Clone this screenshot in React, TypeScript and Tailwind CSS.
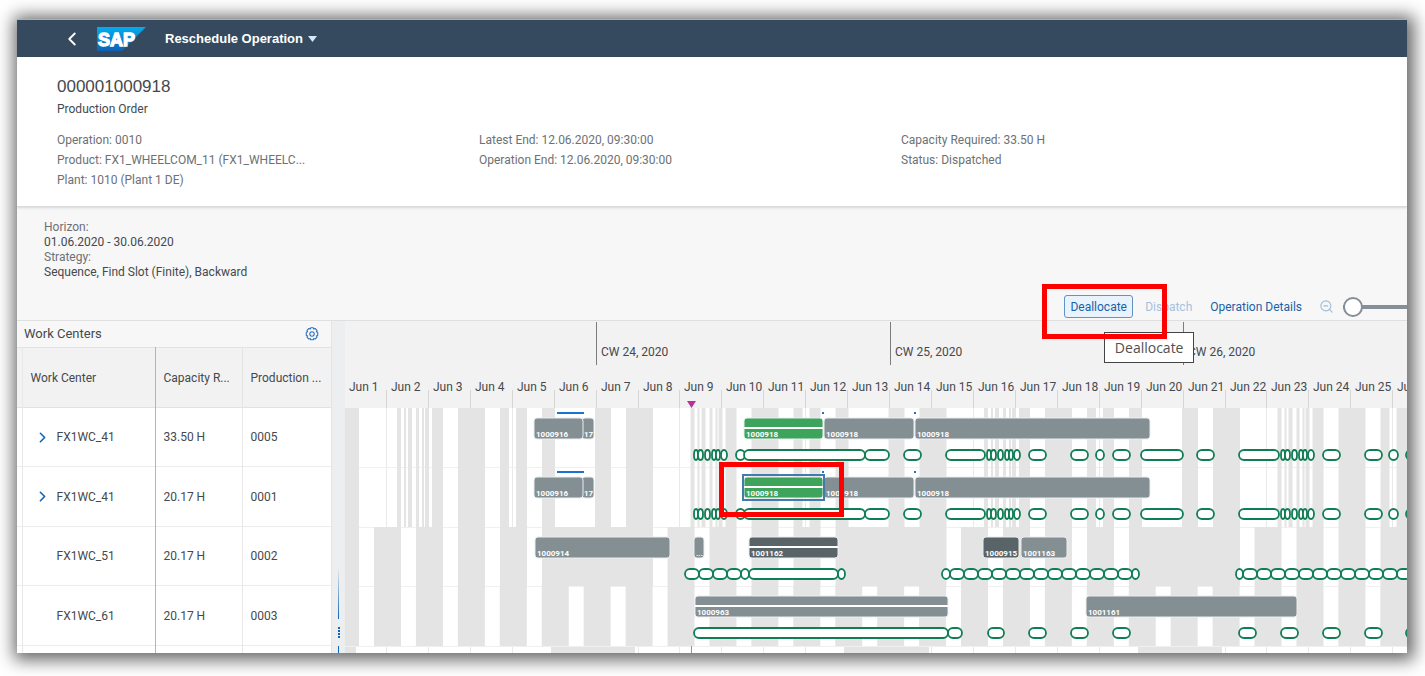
import { ChevronLeft, ChevronRight, ZoomOut } from "lucide-react";

/** Width of one day and of one week on the time axis. */
const DAY = 41.93;
const WEEK = DAY * 7;
const DAYS = Array.from({ length: 26 }, (_, i) => i);

/** Height of the axis above the first row. */
const AXIS = 87;

type Span = [number, number];

interface Bar {
  span: Span;
  label: string;
  tone?: "plain" | "green" | "dark";
  split?: boolean;
}

interface Row {
  center: string;
  capacity: string;
  order: string;
  expandable?: boolean;
  top: number;
  height: number;
  idle: Span[];
  bars: Bar[];
  pills: Span[];
  lines?: Span[];
  selected?: Span;
}

const TONES = { plain: "#848f94", green: "#3fa45b", dark: "#596468" };

const shift = (spans: Span[], by: number): Span[] => spans.map(([a, b]) => [a + by, b + by]);
const weekly = (spans: Span[]): Span[] => [0, 1, 2, 3].flatMap((w) => shift(spans, w * WEEK));

const SHIFT_IDLE: Span[] = [
  [0, 14],
  ...weekly([
    [52, 56], [59, 61], [63, 67], [71, 74], [77, 79], [80, 84], [87, 98],
    [113, 140], [155, 164], [171, 182], [197, 210], [250, 266], [281, 308],
  ]),
];

const WEEKDAY_IDLE: Span[] = [
  [0, 14],
  ...weekly([[29, 56], [71, 98], [113, 140], [155, 182], [197, 308]]),
];

const DAILY_IDLE: Span[] = [[0, 14], ...DAYS.map((d): Span => [29 + d * DAY, 56 + d * DAY])];

const FOOTER_IDLE: Span[] = [[0, 11], [206, 290], [499, 584], [793, 877]];

const MORNING: Span[] = [[642, 646], [646, 651], [653, 658], [660, 664], [664, 668], [669, 675]];

const SHIFT_PILLS: Span[] = [
  ...shift(MORNING, -293),
  [391, 400], [399, 520], [520, 544], [559, 576], [601, 640],
  ...MORNING,
  [684, 701], [726, 743], [751, 759], [768, 785], [796, 838], [852, 869], [894, 934],
  ...shift(MORNING, 294),
  [978, 995], [1020, 1037], [1044, 1053], [1061, 1078],
];

const chain = (from: number, count: number): Span[] =>
  Array.from({ length: count }, (_, i): Span => [from + i * 14, from + (i + 1) * 14]);

const SHIFT_BARS: Bar[] = [
  { span: [237, 249], label: "17" },
  { span: [189, 238], label: "1000916" },
  { span: [399, 478], label: "1000918", tone: "green", split: true },
  { span: [479, 569], label: "1000918" },
  { span: [570, 805], label: "1000918" },
];

const SHIFT_LINES: Span[] = [[212, 239], [477, 479], [569, 571]];

const ROWS: Row[] = [
  {
    center: "FX1WC_41", capacity: "33.50 H", order: "0005", expandable: true,
    top: 0, height: 59, idle: SHIFT_IDLE, bars: SHIFT_BARS, pills: SHIFT_PILLS, lines: SHIFT_LINES,
  },
  {
    center: "FX1WC_41", capacity: "20.17 H", order: "0001", expandable: true,
    top: 59, height: 60, idle: SHIFT_IDLE, bars: SHIFT_BARS, pills: SHIFT_PILLS, lines: SHIFT_LINES,
    selected: [398, 479],
  },
  {
    center: "FX1WC_51", capacity: "20.17 H", order: "0002",
    top: 119, height: 59, idle: WEEKDAY_IDLE,
    bars: [
      { span: [190, 325], label: "1000914" },
      { span: [349, 359], label: "..." },
      { span: [404, 493], label: "1001162", tone: "dark", split: true },
      { span: [638, 674], label: "1000915", tone: "dark" },
      { span: [676, 722], label: "1001163" },
    ],
    pills: [
      ...chain(340, 4), [396, 404], [404, 493], [493, 500],
      [597, 605], ...chain(605, 13), [787, 794],
      [891, 898], ...chain(898, 13),
    ],
  },
  {
    center: "FX1WC_61", capacity: "20.17 H", order: "0003",
    top: 178, height: 60, idle: DAILY_IDLE,
    bars: [
      { span: [350, 603], label: "1000963", split: true },
      { span: [741, 952], label: "1001161" },
    ],
    pills: [
      [349, 603], [603, 617], [643, 659], [684, 701], [726, 743], [768, 785],
      [894, 911], [936, 953], [978, 995], [1020, 1037], [1061, 1078],
    ],
  },
];

function GanttBar({ span: [from, to], label, tone = "plain", split }: Bar) {
  return (
    <g>
      <rect x={from} y={10} width={to - from} height={21} rx={3} fill={TONES[tone]} stroke="#e9edef" />
      {split && <rect x={from} y={19} width={to - from} height={2} fill="#fff" />}
      <text x={from + 2} y={29} fontSize={8} fontWeight={700} fill="#fff">
        {label}
      </text>
    </g>
  );
}

function GanttRow({ row }: { row: Row }) {
  return (
    <g transform={`translate(0 ${AXIS + row.top})`}>
      {row.idle.map(([a, b], i) => (
        <rect key={i} x={a} y={0} width={b - a} height={row.height} fill="#e4e4e4" />
      ))}
      <rect x={0} y={row.height} width="100%" height={1} fill="#f0f0f0" />
      {row.lines?.map(([a, b]) => (
        <rect key={a} x={a} y={4} width={b - a} height={2} fill="#1a73d0" />
      ))}
      {row.bars.map((bar) => (
        <GanttBar key={bar.span[0]} {...bar} />
      ))}
      {row.selected && (
        <rect
          x={row.selected[0]}
          y={8}
          width={row.selected[1] - row.selected[0]}
          height={25}
          fill="none"
          stroke="#427cac"
          strokeWidth={2}
        />
      )}
      {row.pills.map(([a, b], i) => (
        <rect
          key={i}
          x={a}
          y={42}
          width={b - a}
          height={10}
          rx={Math.min(5, (b - a) / 2)}
          ry={5}
          fill="#fff"
          stroke="#107e55"
          strokeWidth={1.8}
        />
      ))}
    </g>
  );
}

function GanttChart() {
  return (
    <svg className="block h-[332px] w-full" role="img" aria-label="Work center schedule">
      <rect width="100%" height="100%" fill="#fff" />
      <rect width="100%" height={AXIS} fill="#f2f2f2" />
      {DAYS.map((d) => (
        <rect key={d} x={Math.round(d * DAY) - 1} y={AXIS} width={1} height={245} fill="#e9e9e9" />
      ))}
      {FOOTER_IDLE.map(([a, b]) => (
        <rect key={a} x={a} y={AXIS + 238} width={b - a} height={20} fill="#e4e4e4" />
      ))}
      {ROWS.map((row) => (
        <GanttRow key={row.order} row={row} />
      ))}
      <g fill="#45494d" fontSize={12}>
        {DAYS.map((d) => (
          <g key={d}>
            {d > 0 && <rect x={Math.round(d * DAY) - 1} y={69} width={1} height={18} fill="#d6d6d6" />}
            <text x={Math.round(d * DAY) + 4} y={70}>
              Jun {d + 1}
            </text>
          </g>
        ))}
        {[24, 25, 26].map((week, i) => (
          <g key={week}>
            <rect x={Math.round(251 + i * WEEK)} y={1} width={1} height={43} fill="#7c7c7c" />
            <text x={Math.round(256 + i * WEEK)} y={35}>
              CW {week}, 2020
            </text>
          </g>
        ))}
      </g>
      <path d="M342 80h9l-4.500 7z" fill="#b9309b" />
      <rect x={346} y={AXIS + 238} width={1} height={10} fill="#c873b4" />
    </svg>
  );
}

function SapLogo() {
  return (
    <svg width="49" height="24" viewBox="0 0 49 24" role="img" aria-label="SAP">
      <defs>
        <linearGradient id="sap" x1="0" y1="0" x2="0" y2="1">
          <stop offset="0" stopColor="#00aeef" />
          <stop offset="1" stopColor="#1160b4" />
        </linearGradient>
      </defs>
      <path d="M0 0h49L25 24H0z" fill="url(#sap)" />
      <text
        x="1"
        y="19"
        fontFamily="Liberation Sans"
        fontSize="18"
        fontWeight="700"
        fill="#fff"
        stroke="#fff"
        strokeWidth="1.3"
      >
        SAP
      </text>
    </svg>
  );
}

function GearIcon() {
  return (
    <svg width="14" height="14" viewBox="0 0 14 14" fill="none" stroke="#2f74bd" strokeWidth="1.1">
      <path d="M5.700 .8h2.600l.5 1.300 1.300-.6 1.900 1.900-.6 1.300 1.300.5v3.200l-1.300.5.6 1.300-1.900 1.900-1.300-.6-.5 1.300H5.700l-.5-1.300-1.300.6L2 10.200l.6-1.300-1.300-.5V5.200l1.300-.5L2 3.400l1.900-1.900 1.300.6z" strokeLinejoin="round" />
      <circle cx="7" cy="7" r="2.200" />
    </svg>
  );
}

function WorkCenterTable() {
  return (
    <section className="w-[315px] shrink-0 border-r border-[#e2e4e6]">
      <div className="flex h-[26px] items-center justify-between pr-3 pl-[7px]">
        <h2 className="text-[13px]">Work Centers</h2>
        <button type="button" aria-label="Settings">
          <GearIcon />
        </button>
      </div>
      <table className="w-full table-fixed border-collapse bg-white text-left text-xs">
        <colgroup>
          <col className="w-[5px]" />
          <col className="w-[133px]" />
          <col className="w-[87px]" />
          <col />
        </colgroup>
        <thead className="bg-[#f2f2f2]">
          <tr className="h-[60px] border-y border-[#e2e2e2]">
            <td className="border-r border-[#e8e8e8]" />
            <th className="border-r border-[#b4b4b4] pl-2 font-normal">Work Center</th>
            <th className="border-r border-[#e4e4e4] pl-2 font-normal">Capacity R...</th>
            <th className="pl-2 font-normal">Production ...</th>
          </tr>
        </thead>
        <tbody>
          {ROWS.map((row) => (
            <tr key={row.order} className="border-b border-[#ececec] odd:h-[59px] even:h-[60px]">
              <td className="border-r border-[#e8e8e8]" />
              <td className="border-r border-[#b4b4b4] pl-[10px]">
                <div className="flex items-center gap-1">
                  <span className="flex w-5 justify-center">
                    {row.expandable && (
                      <button type="button" aria-label="Expand">
                        <ChevronRight size={17} strokeWidth={2.3} color="#1064b4" />
                      </button>
                    )}
                  </span>
                  {row.center}
                </div>
              </td>
              <td className="border-r border-[#e8e8e8] pl-2">{row.capacity}</td>
              <td className="pl-2">{row.order}</td>
            </tr>
          ))}
          <tr className="h-[7px]">
            <td className="border-r border-[#e8e8e8]" />
            <td className="border-r border-[#b4b4b4]" />
            <td className="border-r border-[#e8e8e8]" />
            <td />
          </tr>
        </tbody>
      </table>
    </section>
  );
}

function Splitter() {
  return (
    <div className="flex w-[13px] shrink-0 flex-col items-center justify-end bg-[#eceef0]">
      <div className="h-[52px] w-px bg-linear-to-b from-transparent to-[#1064b4]" />
      <div className="my-2 flex flex-col gap-px">
        {[0, 1, 2, 3].map((dot) => (
          <span key={dot} className="h-[2px] w-[2px] bg-[#1064b4]" />
        ))}
      </div>
      <div className="h-[7px] w-px bg-[#1064b4]" />
    </div>
  );
}

function Toolbar() {
  return (
    <div className="flex items-center text-xs text-[#1b5fa8]">
      <div className="relative">
        <button type="button" className="h-[23px] w-[69px] rounded-[3px] border border-[#5f94c6] bg-[#e8f3fd]">
          Deallocate
        </button>
        <div
          role="tooltip"
          className="absolute top-[37px] left-10 z-10 flex h-[31px] w-[90px] items-center justify-center border border-[#444] bg-white font-['Open_Sans',sans-serif] text-sm text-[#505050]"
        >
          Deallocate
        </div>
        <div className="pointer-events-none absolute -top-[11px] -left-[22px] z-20 h-[55px] w-[125px] border-5 border-[#fe0000]" />
      </div>
      <button type="button" disabled className="ml-3 text-[#a6c2de]">
        Dispatch
      </button>
      <button type="button" className="ml-[18px]">
        Operation Details
      </button>
      <button type="button" disabled aria-label="Zoom out" className="ml-[17px] text-[#9dbddc]">
        <ZoomOut size={15} strokeWidth={1.8} />
      </button>
      <input
        type="range"
        defaultValue={0}
        aria-label="Zoom level"
        className="ml-[9px] h-5 w-16 appearance-none bg-transparent [&::-webkit-slider-runnable-track]:h-1 [&::-webkit-slider-runnable-track]:bg-[#848f99] [&::-webkit-slider-thumb]:-mt-2 [&::-webkit-slider-thumb]:size-5 [&::-webkit-slider-thumb]:appearance-none [&::-webkit-slider-thumb]:rounded-full [&::-webkit-slider-thumb]:border-2 [&::-webkit-slider-thumb]:border-[#848f99] [&::-webkit-slider-thumb]:bg-white"
      />
    </div>
  );
}

export default function App() {
  return (
    <div className="bg-white pt-[19px] pr-[18px] pb-[23px] pl-[17px] font-[Roboto,'Liberation_Sans',sans-serif] text-[#45494d]">
      <main className="overflow-hidden bg-[#f7f7f7] shadow-[2px_2px_16px_5px_rgba(0,0,0,0.6)]">
        <header className="flex h-[38px] items-center border-t border-[#9fb0bf] bg-[#354a5f] pl-11 text-white">
          <button type="button" aria-label="Back">
            <ChevronLeft size={22} strokeWidth={2} />
          </button>
          <a href="#" className="ml-[14px]">
            <SapLogo />
          </a>
          <button
            type="button"
            className="ml-[19px] flex items-center gap-[5px] font-['Liberation_Sans',sans-serif] text-[13px] font-bold"
          >
            Reschedule Operation
            <svg width="9" height="6" viewBox="0 0 9 6" fill="#d1e8ff">
              <path d="M0 0h9L4.500 6z" />
            </svg>
          </button>
        </header>

        <section className="h-[150px] border-b border-[#dcdcdc] bg-white pt-5 pr-[84px] pl-10 text-xs shadow-sm">
          <h1 className="font-['Liberation_Sans',sans-serif] text-[17px] leading-5">000001000918</h1>
          <p className="mt-[2px] leading-5">Production Order</p>
          <div className="mt-[11px] grid grid-cols-3 leading-5 text-[#6d7175]">
            <div>
              <p>Operation: 0010</p>
              <p>Product: FX1_WHEELCOM_11 (FX1_WHEELC...</p>
              <p>Plant: 1010 (Plant 1 DE)</p>
            </div>
            <div>
              <p>Latest End: 12.06.2020, 09:30:00</p>
              <p>Operation End: 12.06.2020, 09:30:00</p>
            </div>
            <div>
              <p>Capacity Required: 33.50 H</p>
              <p>Status: Dispatched</p>
            </div>
          </div>
        </section>

        <section className="pt-[13px]">
          <dl className="pl-[27px] text-xs leading-[15px]">
            <dt className="text-[#6d7175]">Horizon:</dt>
            <dd>01.06.2020 - 30.06.2020</dd>
            <dt className="text-[#6d7175]">Strategy:</dt>
            <dd>Sequence, Find Slot (Finite), Backward</dd>
          </dl>
          <div className="mt-[15px] flex justify-end pb-[2px]">
            <Toolbar />
          </div>
        </section>

        <div className="flex border-t border-[#dfdfdf]">
          <WorkCenterTable />
          <Splitter />
          <div className="relative min-w-0 flex-1">
            <GanttChart />
            <div className="pointer-events-none absolute top-[141px] left-[374px] h-[55px] w-[125px] border-5 border-[#fe0000]" />
          </div>
        </div>
      </main>
    </div>
  );
}
